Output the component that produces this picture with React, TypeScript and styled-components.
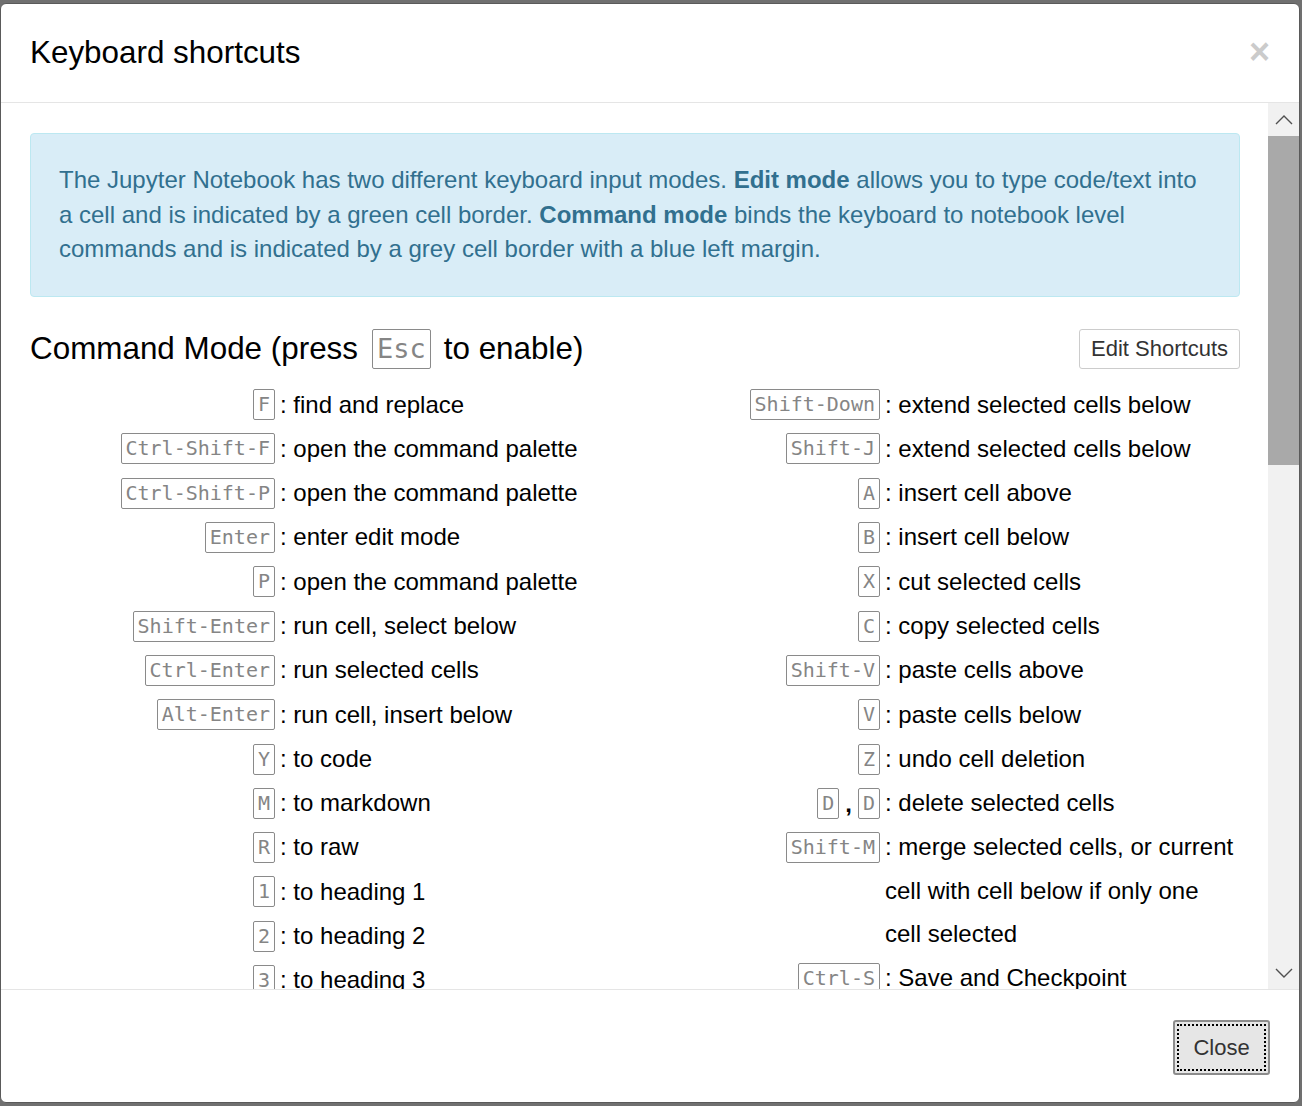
import React from 'react'
import styled, { createGlobalStyle } from 'styled-components'

const GlobalStyle = createGlobalStyle`
  html, body {
    margin: 0;
    padding: 0;
    background: #707070;
    font-family: "Liberation Sans", Arial, sans-serif;
  }
  * { box-sizing: border-box; }
`

type Shortcut = { keys: string[]; descr: string }

const leftShortcuts: Shortcut[] = [
  { keys: ['F'], descr: 'find and replace' },
  { keys: ['Ctrl-Shift-F'], descr: 'open the command palette' },
  { keys: ['Ctrl-Shift-P'], descr: 'open the command palette' },
  { keys: ['Enter'], descr: 'enter edit mode' },
  { keys: ['P'], descr: 'open the command palette' },
  { keys: ['Shift-Enter'], descr: 'run cell, select below' },
  { keys: ['Ctrl-Enter'], descr: 'run selected cells' },
  { keys: ['Alt-Enter'], descr: 'run cell, insert below' },
  { keys: ['Y'], descr: 'to code' },
  { keys: ['M'], descr: 'to markdown' },
  { keys: ['R'], descr: 'to raw' },
  { keys: ['1'], descr: 'to heading 1' },
  { keys: ['2'], descr: 'to heading 2' },
  { keys: ['3'], descr: 'to heading 3' },
  { keys: ['4'], descr: 'to heading 4' },
  { keys: ['5'], descr: 'to heading 5' },
  { keys: ['6'], descr: 'to heading 6' },
  { keys: ['K'], descr: 'select cell above' },
]

const rightShortcuts: Shortcut[] = [
  { keys: ['Shift-Down'], descr: 'extend selected cells below' },
  { keys: ['Shift-J'], descr: 'extend selected cells below' },
  { keys: ['A'], descr: 'insert cell above' },
  { keys: ['B'], descr: 'insert cell below' },
  { keys: ['X'], descr: 'cut selected cells' },
  { keys: ['C'], descr: 'copy selected cells' },
  { keys: ['Shift-V'], descr: 'paste cells above' },
  { keys: ['V'], descr: 'paste cells below' },
  { keys: ['Z'], descr: 'undo cell deletion' },
  { keys: ['D', 'D'], descr: 'delete selected cells' },
  { keys: ['Shift-M'], descr: 'merge selected cells, or current cell with cell below if only one cell selected' },
  { keys: ['Ctrl-S'], descr: 'Save and Checkpoint' },
  { keys: ['S'], descr: 'Save and Checkpoint' },
  { keys: ['L'], descr: 'toggle line numbers' },
]

const Backdrop = styled.div`
  width: 1302px;
  height: 1106px;
  padding-top: 3px;
`

const Modal = styled.div`
  width: 1300px;
  height: 1100px;
  background: #fff;
  border: 1px solid #5a5a5a;
  border-radius: 6px;
  display: flex;
  flex-direction: column;
  overflow: hidden;
`

const Header = styled.div`
  display: flex;
  justify-content: space-between;
  align-items: flex-start;
  padding: 28px 29px 29px;
  border-bottom: 1px solid #e5e5e5;
`

const Title = styled.h4`
  margin: 0;
  font-size: 31.4px;
  line-height: 41px;
  font-weight: normal;
  color: #000;
`

const CloseX = styled.button`
  background: none;
  border: none;
  padding: 0;
  margin-top: 2px;
  font-family: "Liberation Sans", Arial, sans-serif;
  font-size: 36px;
  font-weight: bold;
  line-height: 1;
  color: #000;
  opacity: 0.2;
`

const BodyWrap = styled.div`
  flex: 1;
  min-height: 0;
  display: flex;
`

const BodyContent = styled.div`
  flex: 1;
  overflow: hidden;
  padding: 30px 28px 0 29px;
`

const Alert = styled.div`
  background: #d9edf7;
  border: 1px solid #bce8f1;
  border-radius: 4px;
  color: #31708f;
  font-size: 24px;
  line-height: 34.5px;
  padding: 29px 36px 29px 28px;

  b { font-weight: bold; }
`

const ModeHeading = styled.div`
  display: flex;
  justify-content: space-between;
  align-items: center;
  height: 42px;
  margin-top: 31px;
`

const ModeTitle = styled.h4`
  margin: 0;
  font-size: 31.4px;
  font-weight: normal;
  color: #000;
  display: flex;
  align-items: center;
`

const Kbd = styled.kbd<{ $big?: boolean }>`
  display: inline-block;
  font-family: "DejaVu Sans Mono", monospace;
  font-size: ${p => (p.$big ? '27px' : '20px')};
  line-height: ${p => (p.$big ? '32px' : '23px')};
  padding: 3px 4px;
  margin: ${p => (p.$big ? '0 13px 0 14px' : '0')};
  border: 1px solid #8a8a8a;
  border-radius: 2px;
  color: #858585;
`

const SmallButton = styled.button`
  height: 40px;
  padding: 0 11px;
  font-family: "Liberation Sans", Arial, sans-serif;
  font-size: 22px;
  color: #333;
  background: #fff;
  border: 1px solid #ccc;
  border-radius: 3px;
`

const Columns = styled.div`
  display: grid;
  grid-template-columns: 605px 605px;
  margin-top: 13px;
`

const Row = styled.div`
  display: grid;
  grid-template-columns: 245px 1fr;
  font-size: 24px;
  line-height: 43.5px;
  color: #000;
`

const KeyCell = styled.div`
  height: 44.3px;
  display: flex;
  justify-content: flex-end;
  align-items: center;
`

const Sep = styled.span`
  margin: 0 6px;
  font-weight: bold;
`

const Descr = styled.div`
  padding-left: 5px;
`

const Scrollbar = styled.div`
  width: 31px;
  display: flex;
  flex-direction: column;
  background: #f1f1f1;
`

const ScrollBtn = styled.div`
  height: 33px;
  display: flex;
  align-items: center;
  justify-content: center;
`

const Thumb = styled.div`
  height: 329px;
  background: #a9a9a9;
`

const Track = styled.div`
  flex: 1;
`

const Footer = styled.div`
  display: flex;
  justify-content: flex-end;
  padding: 30px 29px 27px;
  border-top: 1px solid #e5e5e5;
`

const CloseButton = styled.button`
  width: 97px;
  height: 55px;
  font-family: "Liberation Sans", Arial, sans-serif;
  font-size: 22px;
  color: #333;
  background: #e6e6e6;
  border: 2px solid #8c8c8c;
  border-radius: 3px;
  outline: 2px dotted #000;
  outline-offset: -6px;
`

function Chevron({ up }: { up?: boolean }) {
  return (
    <svg width="18" height="10" viewBox="0 0 18 10">
      <path
        d={up ? 'M1 9 L9 1 L17 9' : 'M1 1 L9 9 L17 1'}
        fill="none"
        stroke="#505050"
        strokeWidth="1.4"
      />
    </svg>
  )
}

function ShortcutRow({ s }: { s: Shortcut }) {
  return (
    <Row>
      <KeyCell>
        {s.keys.map((k, i) => (
          <React.Fragment key={i}>
            {i > 0 && <Sep>,</Sep>}
            <Kbd>{k}</Kbd>
          </React.Fragment>
        ))}
      </KeyCell>
      <Descr>: {s.descr}</Descr>
    </Row>
  )
}

export default function App() {
  return (
    <>
      <GlobalStyle />
      <Backdrop>
        <Modal>
          <Header>
            <Title>Keyboard shortcuts</Title>
            <CloseX>×</CloseX>
          </Header>
          <BodyWrap>
            <BodyContent>
              <Alert>
                The Jupyter Notebook has two different keyboard input modes. <b>Edit mode</b> allows you to type
                code/text into a cell and is indicated by a green cell border. <b>Command mode</b> binds the keyboard
                to notebook level commands and is indicated by a grey cell border with a blue left margin.
              </Alert>
              <ModeHeading>
                <ModeTitle>
                  Command Mode (press<Kbd $big>Esc</Kbd>to enable)
                </ModeTitle>
                <SmallButton>Edit Shortcuts</SmallButton>
              </ModeHeading>
              <Columns>
                <div>
                  {leftShortcuts.map((s, i) => (
                    <ShortcutRow key={i} s={s} />
                  ))}
                </div>
                <div>
                  {rightShortcuts.map((s, i) => (
                    <ShortcutRow key={i} s={s} />
                  ))}
                </div>
              </Columns>
            </BodyContent>
            <Scrollbar>
              <ScrollBtn>
                <Chevron up />
              </ScrollBtn>
              <Thumb />
              <Track />
              <ScrollBtn>
                <Chevron />
              </ScrollBtn>
            </Scrollbar>
          </BodyWrap>
          <Footer>
            <CloseButton>Close</CloseButton>
          </Footer>
        </Modal>
      </Backdrop>
    </>
  )
}
